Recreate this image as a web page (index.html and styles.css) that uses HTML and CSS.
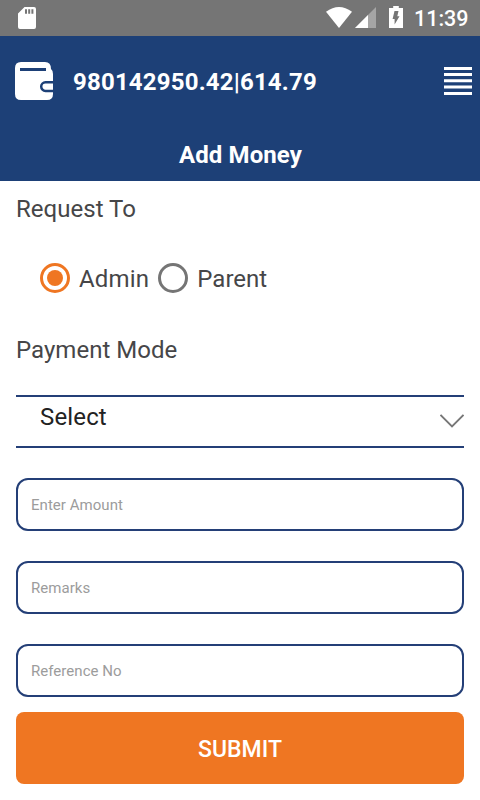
FILE: index.html
```html
<!DOCTYPE html>
<html lang="en">
<head>
<meta charset="utf-8">
<title>Add Money</title>
<link rel="stylesheet" href="styles.css">
</head>
<body>
<div class="status">
  <svg class="sd" width="18" height="22" viewBox="0 0 18 22"><path fill="#fff" fill-rule="evenodd" d="M6.500 0H16q2 0 2 2v18q0 2-2 2H2q-2 0-2-2V6.500ZM7 2.300v4.500h2v-4.500Zm3.200 0v4.500h2v-4.500Zm3.200 0v4.500h2v-4.500Z"/></svg>
  <svg class="wifi" width="26" height="21" viewBox="0 0 26 21"><path fill="#fff" d="M0 4.700Q13-4.700 26 4.700L13 21Z"/></svg>
  <svg class="signal" width="21" height="21" viewBox="0 0 21 21"><path fill="#a5a5a5" d="M21 0v21H0Z"/><path fill="#fff" d="M13 8v13H0Z"/></svg>
  <svg class="battery" width="14" height="22" viewBox="0 0 14 22"><path fill="#fff" d="M4.200 0h5.600v2H14v20H0V2h4.200Z"/><path fill="#757575" d="M5.500 5H9.500L8.300 10.300H10.500L5.600 18.500V13H3.600Z"/></svg>
  <span class="time">11:39</span>
</div>
<header>
  <div class="account">
    <svg width="38" height="38" viewBox="0 0 38 38"><path fill="#fff" d="M6 0h24q6 0 6 7 2 1.500 2 5v20q0 6-6 6H6q-6 0-6-6V6Q0 0 6 0Z"/><path fill="#1d4077" d="M5 6h26v3H5Z"/><path fill="#fff" stroke="#1d4077" stroke-width="2.500" d="M40 20.300h-9.500a4.300 4.300 0 0 0 0 8.600H40"/></svg>
    <span class="balance">980142950.42|614.79</span>
    <svg class="menu" width="28" height="30" viewBox="0 0 28 30"><path fill="#fff" d="M0 1h28v3H0ZM0 7h28v3H0ZM0 13.300h28v3H0ZM0 19.600h28v3H0ZM0 26h28v3H0Z"/></svg>
  </div>
  <h1>Add Money</h1>
</header>
<main>
  <div class="label">Request To</div>
  <div class="radios">
    <span class="radio on"></span><span class="option">Admin</span>
    <span class="radio"></span><span>Parent</span>
  </div>
  <div class="label">Payment Mode</div>
  <div class="select"><span>Select</span>
    <svg width="24" height="14" viewBox="0 0 24 14"><path fill="none" stroke="#777" stroke-width="1.900" d="M.5.8 12 12.500 23.500.8"/></svg>
  </div>
  <div class="field">Enter Amount</div>
  <div class="field">Remarks</div>
  <div class="field">Reference No</div>
  <div class="submit">SUBMIT</div>
</main>
</body>
</html>
```
FILE: styles.css
```css
* { box-sizing: border-box; }
body {
  margin: 0;
  width: 480px;
  height: 800px;
  overflow: hidden;
  background: #fff;
  color: #464648;
  font: 24px/28px Roboto, "Liberation Sans", sans-serif;
}
svg { display: block; flex: none; }
.status {
  display: flex;
  height: 36px;
  padding: 0 12px 0 18px;
  background: #757575;
  color: #fff;
}
.sd { margin-top: 7px; }
.wifi { margin: 7px 0 0 auto; }
.signal { margin: 7px 0 0 3px; }
.battery { margin: 6px 0 0 13px; }
.time {
  width: 54px;
  margin: 5px 0 0 11px;
  font-size: 21.500px;
  font-weight: 500;
}
header {
  height: 145px;
  padding-top: 26px;
  background: #1d4077;
  color: #fff;
  font-weight: 700;
}
.account {
  display: flex;
  height: 38px;
  padding: 0 8px 0 15px;
}
.balance {
  margin: 6px 0 0 20px;
  letter-spacing: .19px;
}
.menu { margin: 4px 0 0 auto; }
h1 {
  margin: 41px 0 0;
  padding-left: 1px;
  font-size: 24px;
  letter-spacing: .1px;
  text-align: center;
}
main { padding: 14px 16px 0; }
.label { letter-spacing: .03px; }
.radios {
  display: flex;
  align-items: center;
  margin: 42px 0 43px 24px;
  height: 28px;
}
.radio {
  display: flex;
  width: 30px;
  height: 30px;
  margin: -2px 9px 0 0;
  border: 3px solid #757575;
  border-radius: 50%;
}
.on { border-color: #ef7622; }
.on::after {
  content: "";
  width: 16px;
  height: 16px;
  margin: auto;
  border-radius: 50%;
  background: #ef7622;
}
.option {
  margin-right: 9px;
  letter-spacing: .2px;
}
.select {
  display: flex;
  justify-content: space-between;
  height: 53px;
  margin: 31px 0 30px;
  padding: 6px 0 0 24px;
  border: solid #243f77;
  border-width: 2px 0;
  color: #222;
  letter-spacing: .15px;
}
.select svg { margin-top: 11px; }
.field {
  height: 53px;
  margin-bottom: 30px;
  padding: 11px 13px;
  border: 2px solid #243f77;
  border-radius: 12px;
  color: #9c9c9c;
  font-size: 15px;
  letter-spacing: .04px;
}
.submit {
  height: 72px;
  margin-top: -15px;
  padding-top: 24px;
  border-radius: 8px;
  background: #ef7622;
  color: #fff;
  font-size: 23px;
  font-weight: 500;
  text-align: center;
}
```
